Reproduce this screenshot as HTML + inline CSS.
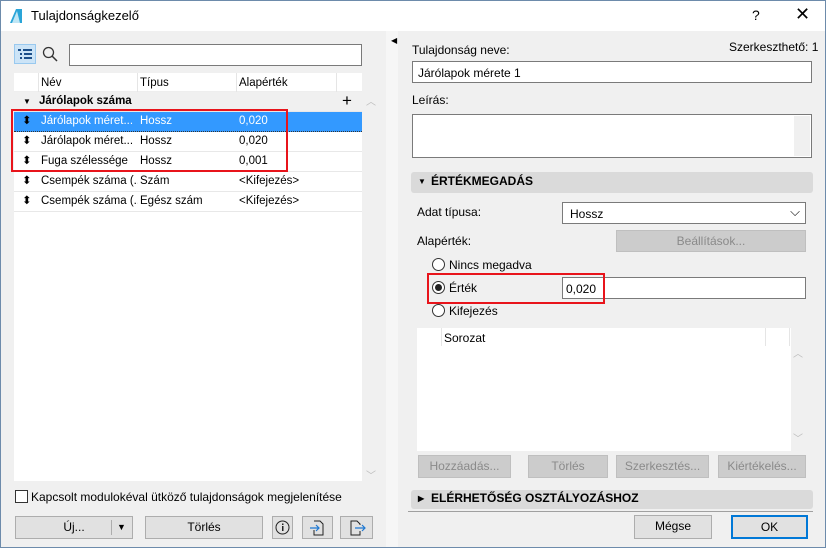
<!DOCTYPE html>
<html><head><meta charset="utf-8"><style>
*{box-sizing:border-box;margin:0;padding:0}
body{width:826px;height:548px;overflow:hidden;font-family:"Liberation Sans",sans-serif;font-size:12px;color:#000;background:#f0f0f0;position:relative}
.a{position:absolute}
.win{left:0;top:0;width:826px;height:548px;border:1px solid #6d8bab}
.title{left:1px;top:1px;width:824px;height:30px;background:#fff}
.inp{background:#fff;border:1px solid #7a7a7a}
.btn{background:#e1e1e1;border:1px solid #adadad;text-align:center;line-height:21px}
.dis{background:#cccccc;border:1px solid #bfbfbf;color:#8a8a8a;text-align:center;line-height:20px}
.row{left:14px;width:348px;height:20px;border-bottom:1px solid #e8e8e8;line-height:19px;font-size:11.5px}
.row span{position:absolute;white-space:nowrap;overflow:hidden}
.red{border:2px solid #e8141b}
.radio{width:13px;height:13px;border:1px solid #333;border-radius:50%;background:#fff}
.sec{background:#dadada;border-radius:3px;font-weight:bold;line-height:19px}
</style></head><body>
<div class="a win"></div>
<div class="a title"></div>
<svg class="a" style="left:9px;top:8px" width="14" height="16"><path d="M1 15 L7 1 L13 1 L13 15 Z" fill="#2aa5d8"/><path d="M3 15 L8 3 L11 15Z" fill="#bfe6f5"/></svg>
<div class="a" style="left:31px;top:8px;font-size:13px">Tulajdonságkezelő</div>
<div class="a" style="left:752px;top:7px;font-size:14px">?</div>
<div class="a" style="left:795px;top:4px;font-size:18px">✕</div>

<div class="a" style="left:14px;top:44px;width:22px;height:20px;background:#cce4f7;border:1px solid #99c9ef"></div>
<svg class="a" style="left:17px;top:48px" width="16" height="12"><g fill="#1c4f8a"><rect x="1" y="1" width="3" height="2"/><rect x="6" y="1" width="9" height="2"/><rect x="3" y="5" width="2" height="2"/><rect x="7" y="5" width="8" height="2"/><rect x="3" y="9" width="2" height="2"/><rect x="7" y="9" width="8" height="2"/></g></svg>
<svg class="a" style="left:42px;top:46px" width="16" height="16"><circle cx="6.5" cy="6.5" r="5" fill="none" stroke="#333" stroke-width="1.3"/><path d="M10 10 L15 15" stroke="#333" stroke-width="1.5"/></svg>
<div class="a inp" style="left:69px;top:44px;width:293px;height:22px"></div>

<div class="a" style="left:14px;top:73px;width:348px;height:408px;background:#fff"></div>
<div class="a" style="left:14px;top:73px;width:348px;height:19px;background:#fff;border-bottom:1px solid #eee"></div>
<div class="a" style="left:38px;top:73px;width:1px;height:19px;background:#e5e5e5"></div>
<div class="a" style="left:137px;top:73px;width:1px;height:19px;background:#e5e5e5"></div>
<div class="a" style="left:236px;top:73px;width:1px;height:19px;background:#e5e5e5"></div>
<div class="a" style="left:336px;top:73px;width:1px;height:19px;background:#e5e5e5"></div>
<div class="a" style="left:41px;top:77px;font-size:11.5px">Név</div>
<div class="a" style="left:140px;top:77px;font-size:11.5px">Típus</div>
<div class="a" style="left:239px;top:77px;font-size:11.5px">Alapérték</div>
<div class="a" style="left:362px;top:92px;width:15px;height:389px;background:#f0f0f0"></div>
<div class="a" style="left:366px;top:93px;color:#bbb;font-size:10px">︿</div>
<div class="a" style="left:366px;top:467px;color:#bbb;font-size:10px">﹀</div>
<div class="a row" style="top:92px;background:#f0f0f0;font-weight:bold"><span style="left:9px;font-size:8px">▼</span><span style="left:25px">Járólapok száma</span><span style="left:328px;font-weight:normal;font-size:17px;top:-1px">+</span></div>
<div class="a row" style="top:112px;background:#3399ff;color:#fff;border-bottom:1px dotted #333"><span style="left:8px;color:#000">⬍</span><span style="left:27px;width:97px">Járólapok méret...</span><span style="left:126px">Hossz</span><span style="left:225px">0,020</span></div>
<div class="a row" style="top:132px"><span style="left:8px">⬍</span><span style="left:27px;width:97px">Járólapok méret...</span><span style="left:126px">Hossz</span><span style="left:225px">0,020</span></div>
<div class="a row" style="top:152px"><span style="left:8px">⬍</span><span style="left:27px;width:97px">Fuga szélessége</span><span style="left:126px">Hossz</span><span style="left:225px">0,001</span></div>
<div class="a row" style="top:172px"><span style="left:8px">⬍</span><span style="left:27px;width:97px">Csempék száma (...</span><span style="left:126px">Szám</span><span style="left:225px">&lt;Kifejezés&gt;</span></div>
<div class="a row" style="top:192px"><span style="left:8px">⬍</span><span style="left:27px;width:97px">Csempék száma (...</span><span style="left:126px">Egész szám</span><span style="left:225px">&lt;Kifejezés&gt;</span></div>
<div class="a red" style="left:11px;top:109px;width:277px;height:63px"></div>

<div class="a" style="left:15px;top:490px;width:13px;height:13px;border:1px solid #333;background:#fff"></div>
<div class="a" style="left:31px;top:490px">Kapcsolt modulokéval ütköző tulajdonságok megjelenítése</div>
<div class="a btn" style="left:15px;top:516px;width:118px;height:23px">Új...<span style="position:absolute;left:95px;top:3px;width:1px;height:15px;background:#adadad"></span><span style="position:absolute;left:101px;font-size:9px">▼</span></div>
<div class="a btn" style="left:145px;top:516px;width:118px;height:23px">Törlés</div>
<div class="a btn" style="left:272px;top:516px;width:21px;height:23px"><svg width="15" height="15" style="margin-top:3px"><circle cx="7.5" cy="7.5" r="6.5" fill="none" stroke="#222"/><rect x="7" y="6" width="1.5" height="5" fill="#222"/><rect x="7" y="3.5" width="1.5" height="1.5" fill="#222"/></svg></div>
<div class="a btn" style="left:302px;top:516px;width:31px;height:23px"><svg width="18" height="18" style="margin-top:2px"><path d="M5 2 H11 L14 5 V16 H5 V11" fill="none" stroke="#222"/><path d="M1 9 H10 M7 6 L10 9 L7 12" fill="none" stroke="#1e78d2" stroke-width="1.2"/></svg></div>
<div class="a btn" style="left:340px;top:516px;width:33px;height:23px"><svg width="18" height="18" style="margin-top:2px"><path d="M12 6 V5 L9 2 H3 V16 H12 V12" fill="none" stroke="#222"/><path d="M7 9 H17 M14 6 L17 9 L14 12" fill="none" stroke="#1e78d2" stroke-width="1.2"/></svg></div>

<div class="a" style="left:386px;top:31px;width:12px;height:516px;background:#f6f6f6"></div>
<div class="a" style="left:391px;top:36px;font-size:8px">◀</div>

<div class="a" style="left:412px;top:43px">Tulajdonság neve:</div>
<div class="a" style="left:729px;top:40px">Szerkeszthető: 1</div>
<div class="a inp" style="left:412px;top:61px;width:400px;height:22px;padding:4px 0 0 5px">Járólapok mérete 1</div>
<div class="a" style="left:412px;top:93px">Leírás:</div>
<div class="a inp" style="left:412px;top:114px;width:400px;height:44px"></div>
<div class="a" style="left:794px;top:116px;width:16px;height:40px;background:#f0f0f0"></div>
<div class="a sec" style="left:411px;top:172px;width:402px;height:21px;padding-left:20px">ÉRTÉKMEGADÁS<span style="position:absolute;left:7px;font-size:8px">▼</span></div>
<div class="a" style="left:417px;top:205px">Adat típusa:</div>
<div class="a inp" style="left:562px;top:202px;width:244px;height:22px;padding:4px 0 0 7px">Hossz<span style="position:absolute;right:5px;top:1px;font-size:13px">⌵</span></div>
<div class="a" style="left:417px;top:234px">Alapérték:</div>
<div class="a dis" style="left:616px;top:230px;width:190px;height:22px">Beállítások...</div>
<div class="a radio" style="left:432px;top:258px"></div>
<div class="a" style="left:449px;top:258px">Nincs megadva</div>
<div class="a radio" style="left:432px;top:281px"><div style="margin:2px;width:7px;height:7px;border-radius:50%;background:#222"></div></div>
<div class="a" style="left:449px;top:281px">Érték</div>
<div class="a inp" style="left:562px;top:277px;width:244px;height:22px;padding:4px 0 0 3px">0,020</div>
<div class="a radio" style="left:432px;top:304px"></div>
<div class="a" style="left:449px;top:304px">Kifejezés</div>
<div class="a red" style="left:427px;top:273px;width:178px;height:31px"></div>
<div class="a" style="left:417px;top:328px;width:374px;height:123px;background:#fff"></div>
<div class="a" style="left:441px;top:328px;width:1px;height:18px;background:#e5e5e5"></div>
<div class="a" style="left:765px;top:328px;width:1px;height:18px;background:#e5e5e5"></div>
<div class="a" style="left:789px;top:328px;width:1px;height:18px;background:#e5e5e5"></div>
<div class="a" style="left:444px;top:331px">Sorozat</div>
<div class="a" style="left:793px;top:345px;color:#bbb;font-size:10px">︿</div>
<div class="a" style="left:793px;top:430px;color:#bbb;font-size:10px">﹀</div>
<div class="a dis" style="left:418px;top:455px;width:93px;height:23px">Hozzáadás...</div>
<div class="a dis" style="left:528px;top:455px;width:80px;height:23px">Törlés</div>
<div class="a dis" style="left:616px;top:455px;width:93px;height:23px">Szerkesztés...</div>
<div class="a dis" style="left:718px;top:455px;width:88px;height:23px">Kiértékelés...</div>
<div class="a sec" style="left:411px;top:490px;width:402px;height:19px;padding-left:20px;line-height:17px">ELÉRHETŐSÉG OSZTÁLYOZÁSHOZ<span style="position:absolute;left:7px;font-size:8px">▶</span></div>
<div class="a" style="left:408px;top:511px;width:405px;height:1px;background:#a0a0a0"></div>
<div class="a btn" style="left:634px;top:515px;width:78px;height:24px">Mégse</div>
<div class="a btn" style="left:731px;top:515px;width:77px;height:24px;border:2px solid #0078d7;line-height:20px">OK</div>
</body></html>
